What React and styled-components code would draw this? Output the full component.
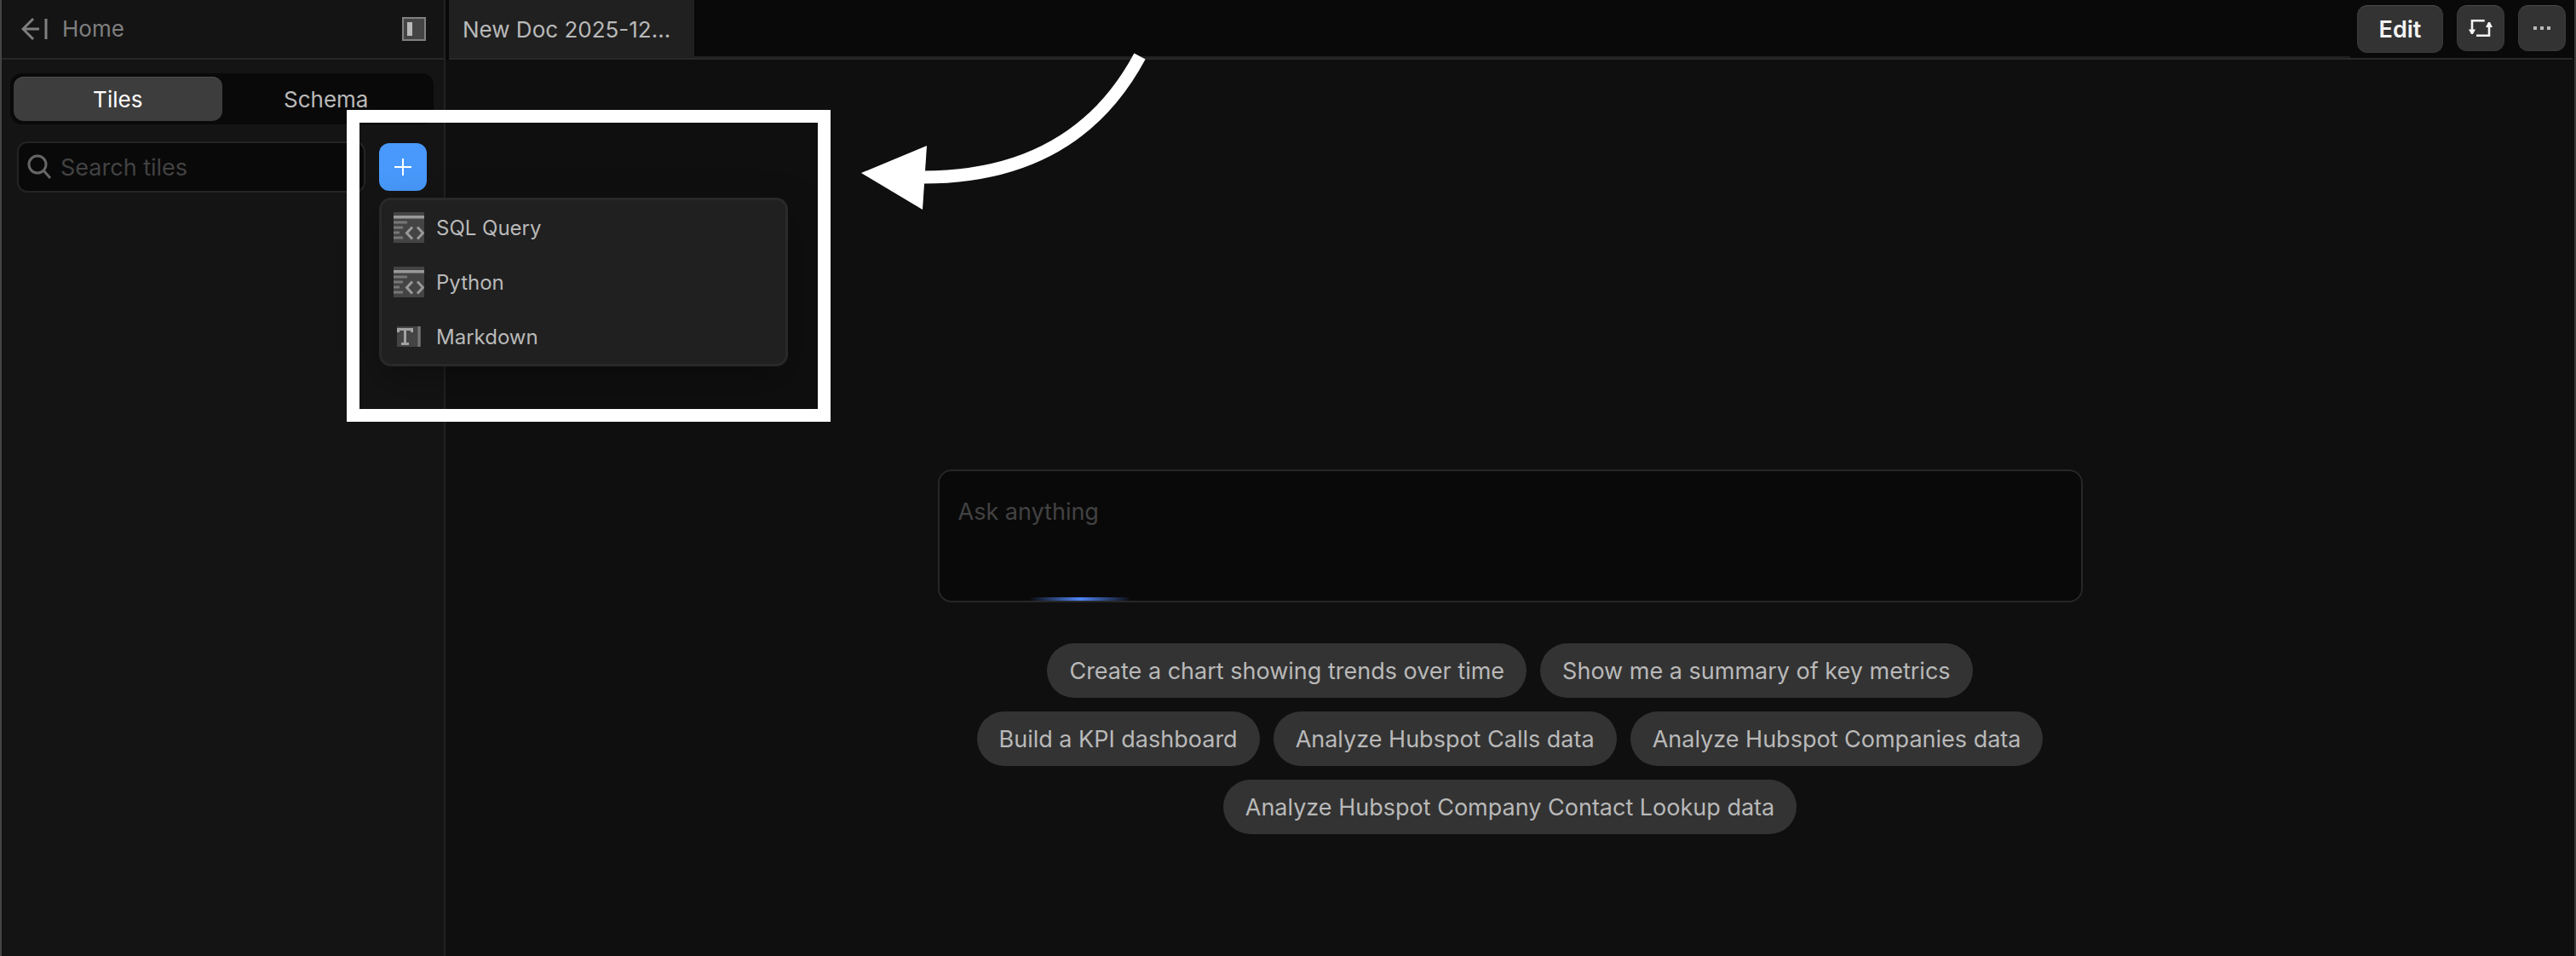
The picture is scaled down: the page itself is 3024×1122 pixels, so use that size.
import React from 'react'
import styled, { createGlobalStyle } from 'styled-components'

const GlobalStyle = createGlobalStyle`
* {
  box-sizing: border-box;
}
body {
  margin: 0;
  background: #0f0f0f;
}
button, input, textarea {
  font-family: inherit;
}
`

const Page = styled.div`
  position: relative;
  display: flex;
  min-height: 100vh;
  border-left: 2px solid #444444;
  border-right: 2px solid #3a3a3a;
  background: #0f0f0f;
  color: #b9b9b9;
  font-family: Inter, 'Liberation Sans', sans-serif;
  font-size: 26px;
  line-height: 32px;
`

const Sidebar = styled.aside`
  flex: 0 0 521px;
  min-width: 0;
  background: #141414;
  border-right: 2px solid #222222;
`

const SidebarHeader = styled.header`
  display: flex;
  align-items: center;
  justify-content: space-between;
  height: 70px;
  padding: 0 21px 0 23px;
  border-bottom: 2px solid #272727;
`

const HomeLink = styled.a`
  display: flex;
  align-items: center;
  gap: 14px;
  color: #7f7f7f;
  text-decoration: none;
`

const IconButton = styled.button`
  display: flex;
  padding: 0;
  border: 0;
  background: none;
  cursor: pointer;
`

const Segmented = styled.div`
  display: flex;
  height: 60px;
  margin: 16px 12px 20px 10px;
  padding: 4px;
  border-radius: 14px;
  background: #090909;
`

const Segment = styled.button`
  flex: 1;
  border: 0;
  border-radius: 12px;
  background: ${({ $active }) => ($active ? '#3d3d3d' : 'transparent')};
  box-shadow: ${({ $active }) => ($active ? 'inset 0 1px 0 #4c4c4c' : 'none')};
  color: ${({ $active }) => ($active ? '#ffffff' : '#b9b9b9')};
  font-size: 26px;
  cursor: pointer;
`

const SearchRow = styled.div`
  display: flex;
  align-items: center;
  gap: 16px;
  padding: 0 20px 0 18px;
`

const SearchBox = styled.label`
  display: flex;
  flex: 1;
  align-items: center;
  gap: 10px;
  min-width: 0;
  height: 60px;
  padding: 0 10px;
  border: 2px solid #242424;
  border-radius: 12px;
  background: #090909;
`

const SearchInput = styled.input`
  flex: 1;
  min-width: 0;
  padding: 0;
  border: 0;
  outline: 0;
  background: none;
  color: #b9b9b9;
  font-size: 27px;
  &::placeholder {
    color: #424242;
    opacity: 1;
  }
`

const AddWrap = styled.div`
  position: relative;
`

const AddButton = styled.button`
  display: flex;
  align-items: center;
  justify-content: center;
  width: 56px;
  height: 56px;
  padding: 0;
  border: 0;
  border-radius: 12px;
  background: #4899fb;
  cursor: pointer;
`

const Menu = styled.div`
  position: absolute;
  top: 64px;
  left: 0;
  z-index: 2;
  width: 480px;
  border: 3px solid #292929;
  border-radius: 14px;
  background: #202020;
  box-shadow: 0 16px 48px rgba(0, 0, 0, 0.3);
`

const MenuItem = styled.button`
  display: flex;
  align-items: center;
  gap: 14px;
  width: 100%;
  height: 64px;
  padding: 0 14px;
  border: 0;
  background: none;
  color: #b9b9b9;
  font-size: 24px;
  cursor: pointer;
`

const MenuIcon = styled.span`
  display: flex;
  justify-content: center;
  width: 36px;
`

const Main = styled.main`
  flex: 1;
  min-width: 0;
`

const TopBar = styled.header`
  display: flex;
  height: 70px;
  padding-left: 4px;
  background: #090909;
`

const DocTab = styled.button`
  width: 288px;
  padding: 0 16px;
  border: 0;
  border-bottom: 2px solid #282828;
  background: #202020;
  color: #b9b9b9;
  font-size: 26px;
  text-align: left;
  white-space: nowrap;
  cursor: pointer;
`

const TabSpace = styled.div`
  flex: 1;
  border-bottom: 2px solid #282828;
  box-shadow: inset 0 -2px 0 #202020;
`

const Actions = styled.div`
  display: flex;
  align-items: flex-start;
  gap: 16px;
  padding: 6px 8px;
  margin-right: 2px;
  border-bottom: 2px solid #282828;
`

const ActionButton = styled.button`
  display: flex;
  align-items: center;
  justify-content: center;
  width: ${({ $wide }) => ($wide ? '101px' : '56px')};
  height: ${({ $wide }) => ($wide ? '56px' : '54px')};
  padding: 0;
  border: 1px solid #3a3a3a;
  border-top-color: #4a4a4a;
  border-radius: 12px;
  background: #333333;
  color: #f4f4f4;
  font-size: 27px;
  font-weight: 600;
  cursor: pointer;
`

const Content = styled.div`
  display: flex;
  flex-direction: column;
  align-items: center;
  padding: 481px 24px 48px;
`

const Prompt = styled.div`
  position: relative;
  width: 100%;
  max-width: 1344px;
  height: 156px;
  border: 2px solid #272727;
  border-radius: 16px;
  background: #090909;
  overflow: hidden;
`

const PromptInput = styled.textarea`
  display: block;
  width: 100%;
  height: 100%;
  padding: 30px 22px;
  border: 0;
  outline: 0;
  resize: none;
  background: none;
  color: #b9b9b9;
  font-size: 27px;
  line-height: 36px;
  &::placeholder {
    color: #424242;
    opacity: 1;
  }
`

const Glow = styled.div`
  position: absolute;
  bottom: 0;
  left: 105px;
  width: 120px;
  height: 4px;
  background: linear-gradient(90deg, transparent, #5085f4, transparent);
`

const Suggestions = styled.div`
  display: flex;
  flex-wrap: wrap;
  justify-content: center;
  gap: 16px;
  width: 100%;
  max-width: 1344px;
  margin-top: 48px;
`

const Chip = styled.button`
  height: 64px;
  padding: 0 26px;
  border: 0;
  border-radius: 32px;
  background: #333333;
  color: #b9b9b9;
  font-size: 27px;
  cursor: pointer;
`

/* callout drawn over the page */
const Highlight = styled.div`
  position: absolute;
  top: 129px;
  left: 405px;
  z-index: 3;
  width: 568px;
  height: 366px;
  border: 15px solid #ffffff;
  pointer-events: none;
`

const Arrow = styled.svg`
  position: absolute;
  top: 60px;
  left: 1008px;
  z-index: 3;
  pointer-events: none;
`

const BackIcon = () => (
  <svg width="34" height="28" viewBox="0 0 34 28" fill="none" stroke="#7f7f7f" strokeWidth="3">
    <path d="M14 2 2 14l12 12M2 14h19M29 2v24" />
  </svg>
)

const PanelIcon = () => (
  <svg width="28" height="28" viewBox="0 0 28 28">
    <rect x="1" y="1" width="26" height="26" fill="#444444" stroke="#808080" strokeWidth="2" />
    <rect x="6" y="6" width="6" height="16" fill="#b9b9b9" />
  </svg>
)

const SearchIcon = () => (
  <svg width="29" height="30" viewBox="0 0 29 30" fill="none" stroke="#666666" strokeWidth="3">
    <circle cx="12" cy="12" r="10" />
    <path d="m19 19 8 9" />
  </svg>
)

const CodeIcon = () => (
  <svg width="36" height="36" viewBox="0 0 36 36">
    <rect width="36" height="36" fill="#444444" />
    <path d="M0 4h36v3.5H0z" fill="#999999" />
    <path d="M0 10.5h16v3H0zM0 16.500h11v3H0zM0 22.500h7v3H0zM0 28.500h11v3H0z" fill="#777777" />
    <path d="m22 17.500-6.500 7 6.500 7M28 17.500l6.500 7-6.500 7" fill="none" stroke="#999999" strokeWidth="3" />
  </svg>
)

const TextIcon = () => (
  <svg width="28" height="24" viewBox="0 0 28 24">
    <rect width="28" height="24" fill="#444444" />
    <path d="M24.500 0h3v24h-3z" fill="#777777" />
    <path d="M1.500 7V3.500h16V7M9.500 3.500v17M5 20.500h9" fill="none" stroke="#a2a2a2" strokeWidth="3" />
  </svg>
)

const SyncIcon = () => (
  <svg width="28" height="20" viewBox="0 0 28 20">
    <path d="M18.700 1.300H4V13M9 18.700h15V8" fill="none" stroke="#f4f4f4" strokeWidth="2.600" />
    <path d="M0 11.500h8l-3 5.500H3zM20 9h8l-3-6h-2z" fill="#f4f4f4" />
  </svg>
)

const DotsIcon = () => (
  <svg width="20" height="4" viewBox="0 0 20 4" fill="#b9b9b9">
    <path d="M0 0h4v4H0zM8 0h4v4H8zM16 0h4v4h-4z" />
  </svg>
)

const PlusIcon = () => (
  <svg width="20" height="20" viewBox="0 0 20 20" fill="none" stroke="#ffffff" strokeWidth="2">
    <path d="M10 0v20M0 10h20" />
  </svg>
)

const tileTypes = [
  { label: 'SQL Query', icon: <CodeIcon /> },
  { label: 'Python', icon: <CodeIcon /> },
  { label: 'Markdown', icon: <TextIcon /> },
]

const suggestions = [
  'Create a chart showing trends over time',
  'Show me a summary of key metrics',
  'Build a KPI dashboard',
  'Analyze Hubspot Calls data',
  'Analyze Hubspot Companies data',
  'Analyze Hubspot Company Contact Lookup data',
]

const App = () => {
  return (
    <Page>
      <GlobalStyle />

      <Sidebar>
        <SidebarHeader>
          <HomeLink href="#">
            <BackIcon />
            Home
          </HomeLink>
          <IconButton aria-label="Toggle sidebar">
            <PanelIcon />
          </IconButton>
        </SidebarHeader>

        <Segmented>
          <Segment $active>Tiles</Segment>
          <Segment>Schema</Segment>
        </Segmented>

        <SearchRow>
          <SearchBox>
            <SearchIcon />
            <SearchInput type="text" placeholder="Search tiles" aria-label="Search tiles" />
          </SearchBox>
          <AddWrap>
            <AddButton aria-label="Add tile">
              <PlusIcon />
            </AddButton>
            <Menu>
              {tileTypes.map((tile) => (
                <MenuItem key={tile.label}>
                  <MenuIcon>{tile.icon}</MenuIcon>
                  {tile.label}
                </MenuItem>
              ))}
            </Menu>
          </AddWrap>
        </SearchRow>
      </Sidebar>

      <Main>
        <TopBar>
          <DocTab>New Doc 2025-12...</DocTab>
          <TabSpace />
          <Actions>
            <ActionButton $wide>Edit</ActionButton>
            <ActionButton aria-label="Sync">
              <SyncIcon />
            </ActionButton>
            <ActionButton aria-label="More">
              <DotsIcon />
            </ActionButton>
          </Actions>
        </TopBar>

        <Content>
          <Prompt>
            <PromptInput placeholder="Ask anything" aria-label="Ask anything" />
            <Glow />
          </Prompt>
          <Suggestions>
            {suggestions.map((text) => (
              <Chip key={text}>{text}</Chip>
            ))}
          </Suggestions>
        </Content>
      </Main>

      <Highlight />
      <Arrow width="340" height="190" viewBox="1010 60 340 190">
        <path d="M1338 66Q1262 208 1084 208" fill="none" stroke="#ffffff" strokeWidth="15" />
        <path d="M1011 203 1088 171 1083 246z" fill="#ffffff" />
      </Arrow>
    </Page>
  )
}

export default App
